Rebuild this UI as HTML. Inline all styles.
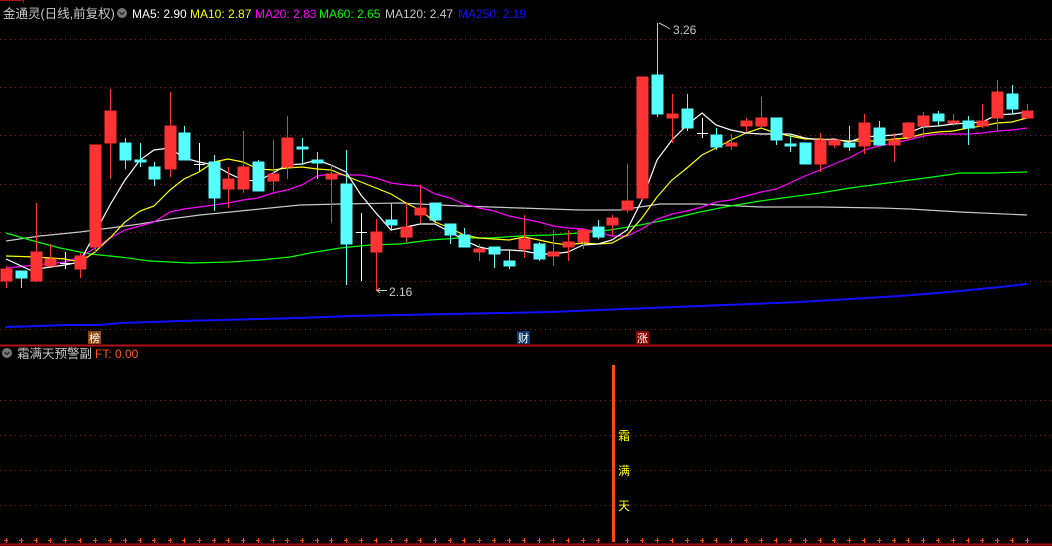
<!DOCTYPE html>
<html><head><meta charset="utf-8"><style>
html,body{margin:0;padding:0;background:#000;}
body{width:1052px;height:546px;overflow:hidden;position:relative;font-family:"Liberation Sans","Noto Sans CJK SC",sans-serif;}
svg{position:absolute;left:0;top:0;}
</style></head><body>
<svg width="1052" height="546" viewBox="0 0 1052 546" xmlns="http://www.w3.org/2000/svg" font-family="Liberation Sans, Noto Sans CJK SC, sans-serif">
<g stroke="#8b1a1a" stroke-dasharray="1,4" stroke-width="1">
<line x1="0" y1="39.5" x2="1052" y2="39.5"/><line x1="0" y1="87.5" x2="1052" y2="87.5"/>
<line x1="0" y1="135.5" x2="1052" y2="135.5"/><line x1="0" y1="184.5" x2="1052" y2="184.5"/>
<line x1="0" y1="232.5" x2="1052" y2="232.5"/><line x1="0" y1="281.5" x2="1052" y2="281.5"/>
<line x1="0" y1="329.5" x2="1052" y2="329.5"/>
<line x1="0" y1="400.5" x2="1052" y2="400.5"/><line x1="0" y1="435.5" x2="1052" y2="435.5"/>
<line x1="0" y1="470.5" x2="1052" y2="470.5"/><line x1="0" y1="505.5" x2="1052" y2="505.5"/>
</g>
<line x1="0" y1="345.5" x2="1052" y2="345.5" stroke="#b01010" stroke-width="2"/>
<line x1="0" y1="544.5" x2="1052" y2="544.5" stroke="#b01010" stroke-width="2"/>
<line x1="0" y1="0.5" x2="23" y2="0.5" stroke="#b01010"/><line x1="23.5" y1="0" x2="23.5" y2="3" stroke="#b01010"/>

<g fill="none" stroke-width="1.2">
<polyline stroke="#1010ff" stroke-width="2" points="5,327 40,326 65,325 100,325 120,323 150,322 180,321 220,320 260,319 300,318 350,316 400,315 450,314 500,313 550,312 600,310 650,308 700,306 750,304 800,302 850,299 900,296 950,292 1000,287 1027,284"/>
<polyline stroke="#c8c8c8" points="6,241 40,236 80,232 110,228 140,224 170,219 200,215 230,212 260,209 300,205 340,204 400,203 460,206 520,208 580,210 620,210 660,204 700,204 760,207 820,207 880,208 910,209 960,212 1027,215"/>
<polyline stroke="#00ff00" points="6,233 30,240 60,248 90,254 120,257 150,261 190,263 230,262 260,260 290,257 310,253 340,248 370,245 400,244 430,240 460,238 490,238 520,236 550,235 580,233 610,230 640,225 670,219 700,212 730,206 760,201 790,197 820,193 850,188 880,184 910,180 940,176 960,173 990,173 1027,172"/>
<polyline stroke="#ff00ff" points="6,268 36,265 65,262 80,257 95,248 110,238 125,230 140,226 154,222 170,212 184,209 199,207 214,205 228,203 243,200 258,198 273,193 287,190 302,185 317,176 331,174 346,175 361,175 376,178 391,183 406,185 420,186 435,194 450,198 464,204 479,208 494,211 509,216 524,219 539,222 553,226 568,228 583,229 598,232 612,236 627,236 642,229 657,219 672,214 687,211 702,207 716,202 731,200 746,196 761,192 776,189 790,183 805,176 820,170 834,164 849,158 864,150 879,146 894,143 908,140 923,136 938,134 953,134 968,134 982,133 997,131 1012,130 1027,128"/>
<polyline stroke="#ffff00" points="6,256 36,257 65,259 80,262 95,252 110,238 125,222 140,211 154,206 170,190 184,179 199,172 214,162 228,159 243,162 258,169 273,170 287,168 302,167 317,169 331,170 346,176 361,182 376,188 391,194 406,203 420,210 435,222 450,228 464,235 479,238 494,239 509,240 524,237 539,240 553,243 568,245 583,243 598,244 612,243 627,235 642,218 657,197 672,180 687,168 702,155 716,148 731,140 746,133 761,128 776,133 790,136 805,139 820,139 834,140 849,141 864,141 879,141 894,139 908,138 923,134 938,132 953,131 968,128 982,126 997,123 1012,122 1027,118"/>
<polyline stroke="#ffffff" points="6,259 30,270 65,265 80,262 95,233 110,205 125,180 140,160 154,150 170,148 184,158 199,162 214,165 228,173 243,180 258,181 273,173 287,165 302,164 317,160 331,165 346,172 361,195 376,213 391,230 406,227 420,224 435,224 450,232 464,240 479,247 494,250 509,250 524,251 539,254 553,254 568,252 583,245 598,244 612,240 627,230 642,200 657,160 672,140 687,125 702,113 716,125 731,130 746,133 761,134 776,134 790,134 805,138 820,140 834,139 849,142 864,137 879,136 894,135 908,133 923,127 938,126 953,124 968,123 982,122 997,115 1012,114 1027,112"/>
</g>

<g stroke-width="1">
<g fill="#ff3333" stroke="#ff3333">
<line x1="6.5" y1="266" x2="6.5" y2="288"/><rect x="1" y="269" width="11" height="12"/>
<line x1="36.5" y1="203" x2="36.5" y2="282"/><rect x="31" y="252" width="11" height="29"/>
<line x1="50.5" y1="244" x2="50.5" y2="266"/><rect x="45" y="259" width="11" height="7"/>
<line x1="80.5" y1="253" x2="80.5" y2="278"/><rect x="75" y="256" width="11" height="13"/>
<line x1="95.5" y1="145" x2="95.5" y2="253"/><rect x="90" y="145" width="11" height="102"/>
<line x1="110.5" y1="89" x2="110.5" y2="179"/><rect x="105" y="111" width="11" height="32"/>
<line x1="170.5" y1="92" x2="170.5" y2="177"/><rect x="165" y="126" width="11" height="43"/>
<line x1="228.5" y1="167" x2="228.5" y2="208"/><rect x="223" y="179" width="11" height="10"/>
<line x1="243.5" y1="131" x2="243.5" y2="193"/><rect x="238" y="167" width="11" height="22"/>
<line x1="273.5" y1="140" x2="273.5" y2="191"/><rect x="268" y="174" width="11" height="7"/>
<line x1="287.5" y1="116" x2="287.5" y2="179"/><rect x="282" y="138" width="11" height="29"/>
<line x1="331.5" y1="164" x2="331.5" y2="223"/><rect x="326" y="174" width="11" height="5"/>
<line x1="376.5" y1="219" x2="376.5" y2="291"/><rect x="371" y="232" width="11" height="20"/>
<line x1="406.5" y1="203" x2="406.5" y2="242"/><rect x="401" y="227" width="11" height="10"/>
<line x1="420.5" y1="185" x2="420.5" y2="223"/><rect x="415" y="208" width="11" height="7"/>
<line x1="479.5" y1="244" x2="479.5" y2="261"/><rect x="474" y="249" width="11" height="3"/>
<line x1="524.5" y1="215" x2="524.5" y2="258"/><rect x="519" y="239" width="11" height="10"/>
<line x1="553.5" y1="230" x2="553.5" y2="266"/><rect x="548" y="252" width="11" height="4"/>
<line x1="568.5" y1="230" x2="568.5" y2="261"/><rect x="563" y="242" width="11" height="5"/>
<line x1="583.5" y1="229" x2="583.5" y2="249"/><rect x="578" y="230" width="11" height="12"/>
<line x1="612.5" y1="215" x2="612.5" y2="236"/><rect x="607" y="218" width="11" height="7"/>
<line x1="627.5" y1="164" x2="627.5" y2="213"/><rect x="622" y="201" width="11" height="9"/>
<line x1="642.5" y1="77" x2="642.5" y2="200"/><rect x="637" y="77" width="11" height="121"/>
<line x1="672.5" y1="94" x2="672.5" y2="143"/><rect x="667" y="114" width="11" height="4"/>
<line x1="731.5" y1="134" x2="731.5" y2="150"/><rect x="726" y="143" width="11" height="3"/>
<line x1="746.5" y1="118" x2="746.5" y2="132"/><rect x="741" y="121" width="11" height="5"/>
<line x1="761.5" y1="97" x2="761.5" y2="128"/><rect x="756" y="118" width="11" height="8"/>
<line x1="820.5" y1="133" x2="820.5" y2="172"/><rect x="815" y="140" width="11" height="24"/>
<line x1="834.5" y1="140" x2="834.5" y2="148"/><rect x="829" y="140" width="11" height="5"/>
<line x1="864.5" y1="114" x2="864.5" y2="154"/><rect x="859" y="123" width="11" height="23"/>
<line x1="894.5" y1="133" x2="894.5" y2="162"/><rect x="889" y="140" width="11" height="5"/>
<line x1="908.5" y1="122" x2="908.5" y2="140"/><rect x="903" y="123" width="11" height="14"/>
<line x1="923.5" y1="112" x2="923.5" y2="138"/><rect x="918" y="116" width="11" height="10"/>
<line x1="953.5" y1="114" x2="953.5" y2="126"/><rect x="948" y="121" width="11" height="2"/>
<line x1="982.5" y1="104" x2="982.5" y2="128"/><rect x="977" y="121" width="11" height="5"/>
<line x1="997.5" y1="80" x2="997.5" y2="131"/><rect x="992" y="92" width="11" height="26"/>
<line x1="1027.5" y1="104" x2="1027.5" y2="118"/><rect x="1022" y="111" width="11" height="7"/>
</g>
<g fill="#55ffff" stroke="#55ffff">
<line x1="21.5" y1="271" x2="21.5" y2="288"/><rect x="16" y="271" width="11" height="7"/>
<line x1="125.5" y1="138" x2="125.5" y2="169"/><rect x="120" y="143" width="11" height="17"/>
<line x1="140.5" y1="143" x2="140.5" y2="167"/><rect x="135" y="160" width="11" height="2"/>
<line x1="154.5" y1="162" x2="154.5" y2="186"/><rect x="149" y="167" width="11" height="12"/>
<line x1="184.5" y1="126" x2="184.5" y2="160"/><rect x="179" y="133" width="11" height="27"/>
<line x1="214.5" y1="155" x2="214.5" y2="211"/><rect x="209" y="162" width="11" height="36"/>
<line x1="258.5" y1="160" x2="258.5" y2="191"/><rect x="253" y="162" width="11" height="29"/>
<line x1="302.5" y1="138" x2="302.5" y2="165"/><rect x="297" y="147" width="11" height="2"/>
<line x1="317.5" y1="152" x2="317.5" y2="179"/><rect x="312" y="160" width="11" height="3"/>
<line x1="346.5" y1="150" x2="346.5" y2="285"/><rect x="341" y="184" width="11" height="60"/>
<line x1="391.5" y1="203" x2="391.5" y2="231"/><rect x="386" y="220" width="11" height="5"/>
<line x1="435.5" y1="203" x2="435.5" y2="223"/><rect x="430" y="203" width="11" height="17"/>
<line x1="450.5" y1="224" x2="450.5" y2="244"/><rect x="445" y="224" width="11" height="11"/>
<line x1="464.5" y1="228" x2="464.5" y2="247"/><rect x="459" y="235" width="11" height="12"/>
<line x1="494.5" y1="247" x2="494.5" y2="268"/><rect x="489" y="247" width="11" height="7"/>
<line x1="509.5" y1="250" x2="509.5" y2="269"/><rect x="504" y="261" width="11" height="5"/>
<line x1="539.5" y1="242" x2="539.5" y2="261"/><rect x="534" y="244" width="11" height="15"/>
<line x1="598.5" y1="220" x2="598.5" y2="239"/><rect x="593" y="227" width="11" height="10"/>
<line x1="657.5" y1="23" x2="657.5" y2="117"/><rect x="652" y="75" width="11" height="39"/>
<line x1="687.5" y1="94" x2="687.5" y2="131"/><rect x="682" y="109" width="11" height="19"/>
<line x1="716.5" y1="128" x2="716.5" y2="150"/><rect x="711" y="135" width="11" height="12"/>
<line x1="776.5" y1="118" x2="776.5" y2="145"/><rect x="771" y="118" width="11" height="22"/>
<line x1="790.5" y1="135" x2="790.5" y2="152"/><rect x="785" y="144" width="11" height="2"/>
<line x1="805.5" y1="143" x2="805.5" y2="164"/><rect x="800" y="143" width="11" height="21"/>
<line x1="849.5" y1="126" x2="849.5" y2="151"/><rect x="844" y="143" width="11" height="4"/>
<line x1="879.5" y1="121" x2="879.5" y2="145"/><rect x="874" y="128" width="11" height="17"/>
<line x1="938.5" y1="111" x2="938.5" y2="126"/><rect x="933" y="114" width="11" height="7"/>
<line x1="968.5" y1="116" x2="968.5" y2="145"/><rect x="963" y="121" width="11" height="7"/>
<line x1="1012.5" y1="85" x2="1012.5" y2="114"/><rect x="1007" y="94" width="11" height="15"/>
</g>
<g stroke="#ffffff">
<line x1="65.5" y1="252" x2="65.5" y2="269"/><line x1="60" y1="263.5" x2="71" y2="263.5"/>
<line x1="199.5" y1="143" x2="199.5" y2="172"/><line x1="194" y1="164.5" x2="205" y2="164.5"/>
<line x1="361.5" y1="213" x2="361.5" y2="281"/><line x1="356" y1="232.5" x2="367" y2="232.5"/>
<line x1="702.5" y1="118" x2="702.5" y2="138"/><line x1="697" y1="133.5" x2="708" y2="133.5"/>
</g>
</g>

<g stroke="#c8c8c8" fill="none"><polyline points="659,23 663,25 670,29"/><line x1="377" y1="290.5" x2="387" y2="290.5"/><polyline points="380,288 377,290.5 380,293"/></g>
<text x="673" y="34" font-size="12" fill="#c8c8c8">3.26</text>
<text x="389" y="296" font-size="12" fill="#c8c8c8">2.16</text>

<text x="3" y="18" font-size="12.5" fill="#c8c8c8">金通灵(日线,前复权)</text>
<circle cx="122" cy="13" r="5" fill="#777"/><polyline points="119.5,12 122,14.5 124.5,12" stroke="#222" fill="none" stroke-width="1.3"/>
<text y="18" font-size="12"><tspan x="132" fill="#ffffff">MA5: 2.90</tspan><tspan x="190" fill="#ffff00">MA10: 2.87</tspan><tspan x="255" fill="#ff00ff">MA20: 2.83</tspan><tspan x="319" fill="#00ff00">MA60: 2.65</tspan><tspan x="385" fill="#c8c8c8">MA120: 2.47</tspan><tspan x="458" fill="#1010ff">MA250: 2.19</tspan></text>

<rect x="88" y="331" width="13" height="13" fill="#8b4a13"/><text x="94.5" y="342" font-size="11" fill="#fff" text-anchor="middle">榜</text>
<rect x="517" y="331" width="13" height="13" fill="#0d3a6e"/><text x="523.5" y="342" font-size="11" fill="#fff" text-anchor="middle">财</text>
<rect x="636" y="331" width="13" height="13" fill="#8b0000"/><text x="642.5" y="342" font-size="11" fill="#fff" text-anchor="middle">涨</text>

<circle cx="7" cy="353" r="5" fill="#777"/><polyline points="4.5,352 7,354.5 9.5,352" stroke="#222" fill="none" stroke-width="1.3"/>
<text x="17" y="358" font-size="12.5" fill="#c8c8c8">霜满天预警副</text>
<text x="95" y="358" font-size="12" fill="#ff5a1e">FT: 0.00</text>

<rect x="612" y="365" width="3" height="177" fill="#ff4a0a"/>
<g font-size="12" fill="#ffff00"><text x="618" y="440">霜</text><text x="618" y="475">满</text><text x="618" y="510">天</text></g>
<g stroke="#ff4a0a" stroke-width="1">
<path d="M4 540.5h4M6.5 538v5M19 540.5h4M21.5 538v5M34 540.5h4M36.5 538v5M48 540.5h4M50.5 538v5M63 540.5h4M65.5 538v5M78 540.5h4M80.5 538v5M93 540.5h4M95.5 538v5M108 540.5h4M110.5 538v5M123 540.5h4M125.5 538v5M138 540.5h4M140.5 538v5M152 540.5h4M154.5 538v5M168 540.5h4M170.5 538v5M182 540.5h4M184.5 538v5M197 540.5h4M199.5 538v5M212 540.5h4M214.5 538v5M226 540.5h4M228.5 538v5M241 540.5h4M243.5 538v5M256 540.5h4M258.5 538v5M271 540.5h4M273.5 538v5M285 540.5h4M287.5 538v5M300 540.5h4M302.5 538v5M315 540.5h4M317.5 538v5M329 540.5h4M331.5 538v5M344 540.5h4M346.5 538v5M359 540.5h4M361.5 538v5M374 540.5h4M376.5 538v5M389 540.5h4M391.5 538v5M404 540.5h4M406.5 538v5M418 540.5h4M420.5 538v5M433 540.5h4M435.5 538v5M448 540.5h4M450.5 538v5M462 540.5h4M464.5 538v5M477 540.5h4M479.5 538v5M492 540.5h4M494.5 538v5M507 540.5h4M509.5 538v5M522 540.5h4M524.5 538v5M537 540.5h4M539.5 538v5M551 540.5h4M553.5 538v5M566 540.5h4M568.5 538v5M581 540.5h4M583.5 538v5M596 540.5h4M598.5 538v5M625 540.5h4M627.5 538v5M640 540.5h4M642.5 538v5M655 540.5h4M657.5 538v5M670 540.5h4M672.5 538v5M685 540.5h4M687.5 538v5M700 540.5h4M702.5 538v5M714 540.5h4M716.5 538v5M729 540.5h4M731.5 538v5M744 540.5h4M746.5 538v5M759 540.5h4M761.5 538v5M774 540.5h4M776.5 538v5M788 540.5h4M790.5 538v5M803 540.5h4M805.5 538v5M818 540.5h4M820.5 538v5M832 540.5h4M834.5 538v5M847 540.5h4M849.5 538v5M862 540.5h4M864.5 538v5M877 540.5h4M879.5 538v5M892 540.5h4M894.5 538v5M906 540.5h4M908.5 538v5M921 540.5h4M923.5 538v5M936 540.5h4M938.5 538v5M951 540.5h4M953.5 538v5M966 540.5h4M968.5 538v5M980 540.5h4M982.5 538v5M995 540.5h4M997.5 538v5M1010 540.5h4M1012.5 538v5M1025 540.5h4M1027.5 538v5"/>
</g>
</svg>
</body></html>
